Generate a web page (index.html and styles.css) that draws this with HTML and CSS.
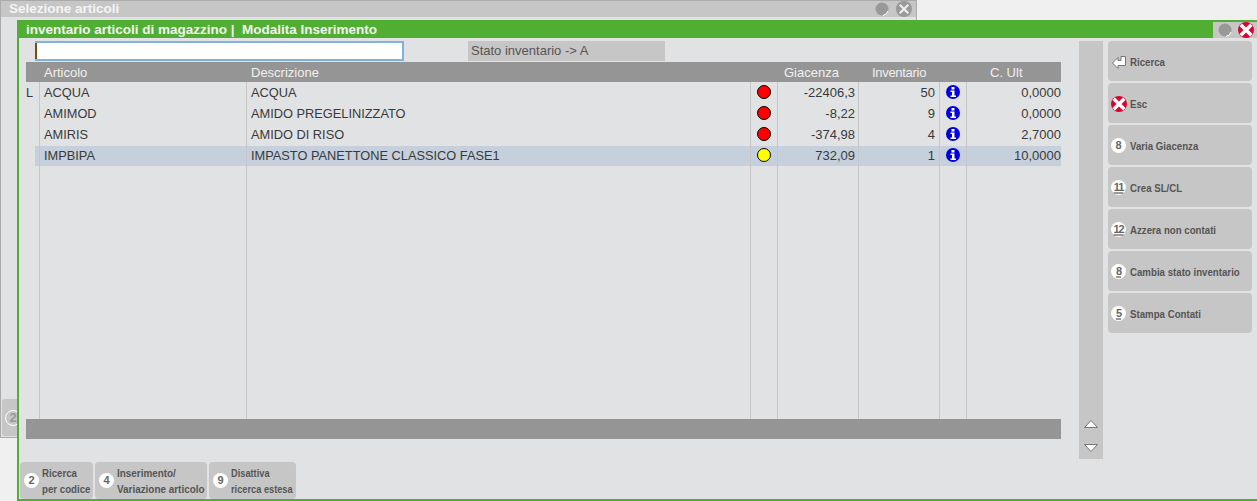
FILE: index.html
```html
<!DOCTYPE html>
<html>
<head>
    <title>Inventario articoli</title>
    <link rel="stylesheet" href="styles.css">
</head>
<body>
    <!-- finestra dietro -->
    <div class="win back">
        <div class="back-title">
            <span>Selezione articoli</span>
            <span class="ctrls">
                <svg class="ctl" viewBox="0 0 14 14"><circle cx="7" cy="7" r="6.5" fill="#999"/><path d="M13 9a6.500 6.500 0 0 1-5 4.500" stroke="#fff" fill="none"/></svg>
                <svg class="ctl-x" viewBox="0 0 16 16"><circle cx="8" cy="8" r="8" fill="#999"/><path d="M4.500 3 8 6.500 11.500 3l1.500 1.500L9.500 8l3.500 3.500-1.500 1.500L8 9.500 4.500 13 3 11.500 6.500 8 3 4.500z" fill="#eee"/></svg>
            </span>
        </div>
        <div class="back-btn"><span class="num ghost">2</span></div>
    </div>

    <!-- finestra attiva -->
    <div class="win front">
        <div class="title">
            <span class="title-text">inventario articoli di magazzino |&nbsp; Modalita Inserimento</span>
            <span class="ctrls front-ctrls">
                <svg class="ctl" viewBox="0 0 14 14"><circle cx="7" cy="7" r="6.5" fill="#999"/><path d="M13 9a6.500 6.500 0 0 1-5 4.500" stroke="#fff" fill="none"/></svg>
                <svg class="ctl-x" viewBox="0 0 16 16"><use href="#x"/></svg>
            </span>
        </div>
        <div class="content">
            <div class="main">
                <div class="search-row">
                    <div class="search"><span class="caret"></span></div>
                    <div class="stato">Stato inventario -&gt; A</div>
                </div>
                <table class="grid">
                    <colgroup>
                        <col style="width: 13px"><col style="width: 207px"><col style="width: 504px"><col style="width: 27px">
                        <col style="width: 81px"><col style="width: 81px"><col style="width: 27px"><col style="width: 95px">
                    </colgroup>
                    <thead>
                        <tr>
                            <th></th>
                            <th>Articolo</th>
                            <th>Descrizione</th>
                            <th></th>
                            <th class="h-gia">Giacenza</th>
                            <th class="h-inv">Inventario</th>
                            <th></th>
                            <th class="h-ult">C. Ult</th>
                        </tr>
                    </thead>
                    <tbody>
                        <tr>
                            <td>L</td><td>ACQUA</td><td>ACQUA</td>
                            <td class="ic"><span class="dot red"></span></td>
                            <td class="r">-22406,3</td><td class="r inv">50</td>
                            <td class="ic"><svg class="info" viewBox="0 0 14 14"><use href="#i"/></svg></td>
                            <td class="r ult">0,0000</td>
                        </tr>
                        <tr>
                            <td></td><td>AMIMOD</td><td>AMIDO PREGELINIZZATO</td>
                            <td class="ic"><span class="dot red"></span></td>
                            <td class="r">-8,22</td><td class="r inv">9</td>
                            <td class="ic"><svg class="info" viewBox="0 0 14 14"><use href="#i"/></svg></td>
                            <td class="r ult">0,0000</td>
                        </tr>
                        <tr>
                            <td></td><td>AMIRIS</td><td>AMIDO DI RISO</td>
                            <td class="ic"><span class="dot red"></span></td>
                            <td class="r">-374,98</td><td class="r inv">4</td>
                            <td class="ic"><svg class="info" viewBox="0 0 14 14"><use href="#i"/></svg></td>
                            <td class="r ult">2,7000</td>
                        </tr>
                        <tr class="sel">
                            <td></td><td>IMPBIPA</td><td>IMPASTO PANETTONE CLASSICO FASE1</td>
                            <td class="ic"><span class="dot yellow"></span></td>
                            <td class="r">732,09</td><td class="r inv">1</td>
                            <td class="ic"><svg class="info" viewBox="0 0 14 14"><use href="#i"/></svg></td>
                            <td class="r ult">10,0000</td>
                        </tr>
                        <tr class="filler">
                            <td></td><td></td><td></td><td></td><td></td><td></td><td></td><td></td>
                        </tr>
                    </tbody>
                </table>
                <div class="grid-foot"></div>
            </div>

            <div class="scroll">
                <svg class="arrow" viewBox="0 0 14 8"><path d="M.5 7.500 7 .5l6.500 7z" fill="#fff" stroke="#777"/></svg>
                <svg class="arrow" viewBox="0 0 14 8"><path d="M.5 .5h13L7 7.500z" fill="#fff" stroke="#777"/></svg>
            </div>

            <div class="side">
                <div class="btn">
                    <svg class="btn-ic" viewBox="0 0 16 16"><path d="M1.500 9 7 3.500v3h3v-4h4.500v9H7v3z" fill="#fff" stroke="#777"/></svg>
                    <span class="lbl">Ricerca</span>
                </div>
                <div class="btn">
                    <svg class="btn-ic" viewBox="0 0 16 16"><use href="#x"/></svg>
                    <span class="lbl">Esc</span>
                </div>
                <div class="btn"><span class="num">8</span><span class="lbl">Varia Giacenza</span></div>
                <div class="btn"><span class="num ul">11</span><span class="lbl">Crea SL/CL</span></div>
                <div class="btn"><span class="num ul">12</span><span class="lbl">Azzera non contati</span></div>
                <div class="btn"><span class="num ul">8</span><span class="lbl">Cambia stato inventario</span></div>
                <div class="btn"><span class="num ul">5</span><span class="lbl">Stampa Contati</span></div>
            </div>
        </div>
        <div class="footer">
            <div class="fbtn b1"><span class="num">2</span><span class="lbl">Ricerca<br>per codice</span></div>
            <div class="fbtn b2"><span class="num">4</span><span class="lbl">Inserimento/<br>Variazione articolo</span></div>
            <div class="fbtn b3"><span class="num">9</span><span class="lbl">Disattiva<br>ricerca estesa</span></div>
        </div>
    </div>

    <svg class="defs" width="0" height="0">
        <symbol id="i" viewBox="0 0 14 14">
            <circle cx="7" cy="7" r="7" fill="#0000e0"/>
            <rect x="5.500" y="2" width="3" height="2.500" fill="#fff"/>
            <path d="M4.500 5.500h4v5h1.500V12H4.500v-1.500H6V7H4.500z" fill="#fff"/>
        </symbol>
        <symbol id="x" viewBox="0 0 16 16">
            <circle cx="8" cy="8" r="8" fill="#d8062f"/>
            <path d="M4 1.500 8 5.500 12 1.500 14.500 4 10.500 8 14.500 12 12 14.500 8 10.500 4 14.500 1.500 12 5.500 8 1.500 4z" fill="#fff"/>
        </symbol>
    </svg>
</body>
</html>
```

FILE: styles.css
```css
html, body {
    margin: 0;
    height: 501px;
    overflow: hidden;
}
body {
    position: relative;
    background-color: #f0f0f0;
    font-family: "Liberation Sans", Arial, sans-serif;
    font-size: 13px;
    color: #3a3a3a;
}

/* finestre */
.win {
    position: absolute;
    box-sizing: border-box;
}
.back {
    left: 0;
    top: 0;
    width: 917px;
    height: 438px;
    background-color: #e1e2e4;
    border: 1px solid #aaa;
}
.back-title {
    display: flex;
    justify-content: space-between;
    align-items: center;
    height: 16px;
    padding-left: 8px;
    background-color: #c6c6c6;
    color: #f4f4f4;
    font-size: 13.5px;
    font-weight: bold;
    line-height: 14px;
}
.back-btn {
    position: absolute;
    left: 1px;
    top: 398px;
    width: 30px;
    height: 37px;
    display: flex;
    align-items: center;
    padding-left: 3px;
    box-sizing: border-box;
    background-color: #c6c6c6;
    border-radius: 3px;
}
.front {
    left: 17px;
    top: 20px;
    width: 1240px;
    height: 481px;
    background-color: #e1e2e4;
    border-left: 2px solid #50ae32;
    border-bottom: 2px solid #50ae32;
    display: flex;
    flex-direction: column;
}
.title {
    display: flex;
    justify-content: space-between;
    flex: none;
    height: 18px;
    background-color: #50ae32;
}
.title-text {
    padding-left: 7px;
    line-height: 19px;
    font-size: 13.5px;
    font-weight: bold;
    color: #f2f5ee;
}
.ctrls {
    display: flex;
    align-items: center;
    gap: 7px;
    padding-right: 4px;
}
.front-ctrls {
    padding: 0 3px 0 5px;
    margin-top: 2px;
    background-color: #c6c6c6;
    gap: 6px;
}
.ctl {
    width: 14px;
    height: 14px;
}
.ctl-x {
    width: 16px;
    height: 16px;
}

/* griglia */
.content {
    display: flex;
    flex: none;
    height: 418px;
    padding-top: 3px;
}
.main {
    width: 1035px;
    margin-left: 7px;
}
.search-row {
    display: flex;
    gap: 64px;
    height: 21px;
    margin-left: 9px;
}
.search {
    box-sizing: border-box;
    width: 369px;
    height: 20px;
    background-color: #fff;
    border: 2px solid #82b2dc;
    border-left: 0;
}
.caret {
    display: block;
    width: 2px;
    height: 16px;
    background-color: #7a4a1e;
}
.stato {
    width: 197px;
    height: 20px;
    line-height: 20px;
    padding-left: 3px;
    box-sizing: border-box;
    background-color: #c6c6c6;
    color: #555;
}
.grid {
    border-collapse: separate;
    border-spacing: 0;
    table-layout: fixed;
    width: 1035px;
}
.grid th {
    height: 20px;
    padding: 0 0 0 5px;
    background-color: #959595;
    color: #f0f0f0;
    font-weight: normal;
    text-align: left;
}
.grid th.h-gia {
    padding-left: 7px;
}
.grid th.h-inv {
    padding-left: 14px;
    letter-spacing: -0.3px;
}
.grid th.h-ult {
    padding-left: 24px;
}
.grid td {
    box-sizing: border-box;
    height: 21px;
    padding: 0 0 0 4px;
    border-left: 1px solid #c6c6c6;
    font-size: 12.8px;
    white-space: nowrap;
}
.grid td:first-child {
    border-left: 0;
    padding-left: 0;
}
.grid td.r {
    text-align: right;
    padding: 0 3px 0 0;
    font-size: 13px;
}
.grid td.inv {
    padding-right: 4px;
}
.grid td.ult {
    padding-right: 0;
}
.grid td.ic {
    padding: 0;
    text-align: center;
    vertical-align: top;
    line-height: 0;
}
.sel td {
    background: linear-gradient(#c5d0dc, #c5d0dc) 0 1px / 100% 20px no-repeat;
}
.sel td:first-child {
    background-position: 9px 1px;
}
.grid .filler td {
    height: 253px;
}
.grid-foot {
    height: 20px;
    background-color: #959595;
}
.dot {
    display: inline-block;
    box-sizing: border-box;
    width: 14px;
    height: 14px;
    margin-top: 3px;
    border: 1px solid #000;
    border-radius: 50%;
}
.red {
    background-color: #f00;
}
.yellow {
    background-color: #ff0;
}
.info {
    display: inline-block;
    width: 14px;
    height: 14px;
    margin-top: 3px;
}
.defs {
    position: absolute;
}

/* barra di scorrimento */
.scroll {
    display: flex;
    flex-direction: column;
    justify-content: flex-end;
    align-items: center;
    gap: 16px;
    width: 24px;
    margin-left: 18px;
    padding-bottom: 7px;
    box-sizing: border-box;
    background-color: #c6c6c6;
}
.arrow {
    width: 14px;
    height: 8px;
}

/* pulsanti */
.side {
    display: flex;
    flex-direction: column;
    gap: 2px;
    margin-left: 5px;
}
.btn {
    display: flex;
    align-items: center;
    gap: 4px;
    box-sizing: border-box;
    width: 144px;
    height: 40px;
    padding: 1px 0 0 3px;
    background-color: #c6c6c6;
    border-radius: 4px;
    color: #555;
    font-size: 11px;
    font-weight: bold;
    white-space: nowrap;
}
.lbl {
    display: block;
    transform: scaleX(0.88);
    transform-origin: left center;
}
.btn-ic {
    width: 16px;
    height: 16px;
    flex: none;
    margin-right: -1px;
}
.num {
    box-sizing: border-box;
    flex: none;
    width: 15px;
    height: 15px;
    border-radius: 50%;
    background-color: #fff;
    color: #666;
    font-size: 11px;
    font-weight: bold;
    line-height: 15px;
    text-align: center;
}
.num.ul {
    letter-spacing: -1px;
    text-decoration: underline;
    text-decoration-thickness: 2px;
    text-decoration-color: #999;
}
.num.ghost {
    width: 16px;
    height: 16px;
    background-color: transparent;
    border: 1px solid #fff;
    color: #999;
    font-size: 13px;
    line-height: 14px;
}
.footer {
    display: flex;
    gap: 2px;
    padding: 3px 0 0 1px;
}
.fbtn {
    display: flex;
    align-items: center;
    gap: 3px;
    box-sizing: border-box;
    height: 37px;
    padding-left: 4px;
    background-color: #c6c6c6;
    border-radius: 4px;
    color: #555;
    font-size: 11px;
    font-weight: bold;
    line-height: 16px;
    white-space: nowrap;
}
.b1 {
    width: 73px;
}
.b2 {
    width: 112px;
}
.b2 .lbl {
    transform: scaleX(0.9);
}
.b3 {
    width: 87px;
}
.b3 .lbl {
    transform: scaleX(0.84);
}
```
